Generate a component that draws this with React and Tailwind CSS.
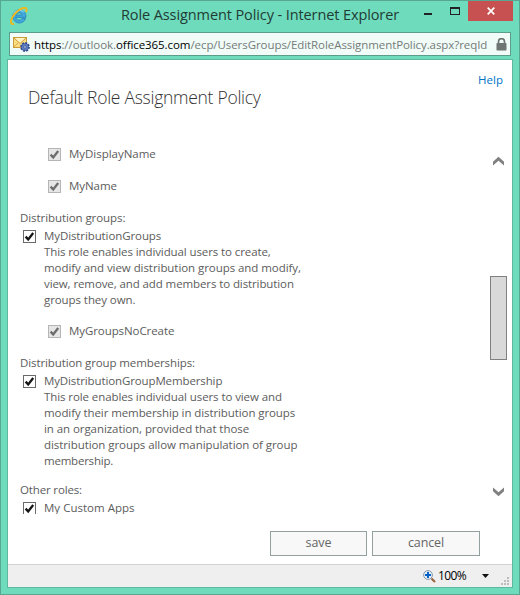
import React from "react";

function IELogo() {
  return (
    <svg width="18" height="18" viewBox="0 0 18 18" className="shrink-0">
      <path d="M15.6 11.6H11.9A3.4 3.4 0 0 1 5.6 10.4H15.9A6.6 6.6 0 1 0 15.6 11.6ZM5.7 8A3.4 3.4 0 0 1 12.1 8Z" fill="#41a9e0" stroke="#2179b5" strokeWidth=".7" />
      <path d="M3.6 8.2A6 6 0 0 1 13.6 4.9" fill="none" stroke="#8ad6f7" strokeWidth="1.2" />
      <path d="M3.9 16.9C1.6 17.6 .4 16 1.3 13C2.3 9.8 5 6.2 8.4 3.6C12 .8 15.6 .1 16.4 1.7C16.8 2.5 16.6 3.6 16 5" fill="none" stroke="#f0b91c" strokeWidth="1.9" />
    </svg>
  );
}

function MailGear() {
  return (
    <svg width="17" height="16" viewBox="0 0 17 16" className="shrink-0">
      <rect x=".5" y="1.5" width="13" height="10" fill="#fbdc80" stroke="#c99b3a" />
      <path d="M1 2L7 7.5L13 2" fill="#fff3c0" stroke="#c99b3a" />
      <path d="M1 11L5.5 6.5" stroke="#d9ad4c" />
      <circle cx="12" cy="11" r="4" fill="#4d69ac" stroke="#2f4a8c" strokeWidth="1.8" strokeDasharray="1.8 1.3" />
      <circle cx="12" cy="11" r="3.2" fill="#5b7abf" />
      <circle cx="12" cy="11" r="1.2" fill="#dbe5f7" stroke="#2f4a8c" strokeWidth=".7" />
    </svg>
  );
}

function Lock() {
  return (
    <svg width="11" height="13" viewBox="0 0 11 13" className="shrink-0">
      <path d="M2.5 6V3.6A2.9 2.9 0 0 1 8.5 3.6V6" fill="none" stroke="#6f7573" strokeWidth="1.7" />
      <rect x=".5" y="5" width="10" height="7.5" rx=".8" fill="#6f7573" />
    </svg>
  );
}

function Check({ disabled }) {
  return (
    <svg width="13" height="13" viewBox="0 0 13 13" className="shrink-0">
      <rect x=".5" y=".5" width="12" height="12" fill={disabled ? "#e6e6e6" : "#fff"} stroke={disabled ? "#b5b5b5" : "#6a6a6a"} />
      <path d="M2.6 6.6L5.2 9.4L10.2 3" fill="none" stroke={disabled ? "#6d6d6d" : "#161616"} strokeWidth="2.3" />
    </svg>
  );
}

function SubRole({ name, tracking }) {
  return (
    <div className="ml-10 flex h-4 items-center gap-2">
      <Check disabled />
      <span className={tracking}>{name}</span>
    </div>
  );
}

function Role({ name, tracking, lines = [] }) {
  return (
    <div className="ml-[15px] flex items-start gap-2">
      <div className="mt-[2px] flex"><Check /></div>
      <div className="whitespace-nowrap">
        <div className={tracking}>{name}</div>
        {lines.map(([text, spacing]) => (
          <div key={text} className={spacing}>{text}</div>
        ))}
      </div>
    </div>
  );
}

function Chevron({ down }) {
  return (
    <svg width="11" height="10" viewBox="0 0 11 10" className={down ? "rotate-180" : ""}>
      <path d="M0 5.8L5.5 .7L11 5.8V9.4L5.5 4.8L0 9.4Z" fill="#808080" />
    </svg>
  );
}

export default function App() {
  return (
    <div className="flex h-[595px] w-[520px] flex-col overflow-hidden border border-[#58a793] bg-[#6fdbbd] font-['Open_Sans','Noto_Sans',sans-serif] text-[11.5px] leading-4 whitespace-nowrap text-[#5c5c5c]">
      <header className="flex h-[31px] items-start pl-[9px]">
        <div className="mt-[6px]"><IELogo /></div>
        <h1 className="mt-[4px] ml-[93px] w-[280px] text-[14.5px] leading-5 tracking-[-0.1px] text-[#1f3b34]">Role Assignment Policy - Internet Explorer</h1>
        <svg width="40" height="20" viewBox="0 0 40 20" className="ml-[23px] shrink-0" shapeRendering="crispEdges">
          <rect x="0" y="12" width="8" height="2" fill="#222" />
          <path d="M26 6H36V14H26Z M27 8V13H35V8Z" fillRule="evenodd" fill="#222" />
        </svg>
        <div className="ml-auto mr-[6px] flex h-5 w-[45px] items-center justify-center bg-[#c75050]">
          <svg width="8" height="8" viewBox="0 0 8 8"><path d="M.7 .7L7.3 7.3M7.3 .7L.7 7.3" stroke="#fff" strokeWidth="1.7" /></svg>
        </div>
      </header>

      <div className="mx-2 flex h-6 items-center border border-[#5c9c8b] bg-[#f1fbf8] pr-[3px] pl-[3px]">
        <MailGear />
        <div className="mt-px ml-[4px] w-[457px] tracking-[-0.07px] text-[#747b79]">
          <span className="text-black">https</span>://outlook.<span className="text-black">office365.com</span>/ecp/UsersGroups/EditRoleAssignmentPolicy.aspx?reqId
        </div>
        <div className="ml-auto"><Lock /></div>
      </div>

      <main className="mx-[6px] mt-[3px] flex h-[529px] flex-col border border-[#5eb8a0] bg-white">
        <div className="flex h-7 items-center justify-end pt-3 pr-[9px] text-[#0072c6]">Help</div>
        <h2 className="-mt-px ml-5 h-[25px] text-[17.5px] leading-5 font-light tracking-[-0.27px] text-[#333]">Default Role Assignment Policy</h2>
        <div className="mt-[34px] flex h-[368px]">
          <div className="w-[482px] overflow-hidden">
            <SubRole name="MyDisplayName" tracking="tracking-[-0.03px]" />
            <div className="h-4" />
            <SubRole name="MyName" tracking="tracking-[-0.05px]" />
            <h3 className="mt-4 ml-3 tracking-[-0.08px]">Distribution groups:</h3>
            <div className="h-[2px]" />
            <Role
              name="MyDistributionGroups"
              tracking="tracking-[-0.1px]"
              lines={[
                ["This role enables individual users to create,", "tracking-[-0.1px]"],
                ["modify and view distribution groups and modify,", "tracking-[-0.06px]"],
                ["view, remove, and add members to distribution", "tracking-[-0.1px]"],
                ["groups they own.", "tracking-[-0.08px]"],
              ]}
            />
            <div className="h-[15px]" />
            <SubRole name="MyGroupsNoCreate" tracking="tracking-[-0.08px]" />
            <h3 className="mt-4 ml-3 tracking-[-0.11px]">Distribution group memberships:</h3>
            <div className="h-[2px]" />
            <Role
              name="MyDistributionGroupMembership"
              tracking="tracking-[-0.12px]"
              lines={[
                ["This role enables individual users to view and", "tracking-[-0.09px]"],
                ["modify their membership in distribution groups", "tracking-[-0.09px]"],
                ["in an organization, provided that those", "tracking-[-0.07px]"],
                ["distribution groups allow manipulation of group", "tracking-[-0.07px]"],
                ["membership.", "tracking-[-0.22px]"],
              ]}
            />
            <h3 className="mt-[13px] ml-3 tracking-[-0.15px]">Other roles:</h3>
            <div className="h-[2px]" />
            <Role name="My Custom Apps" tracking="tracking-[0.02px]" />
          </div>
          <div className="flex w-[17px] flex-col items-center pt-[10px] pr-px">
            <Chevron />
            <div className="mt-[110px] -mr-px h-[84px] w-[17px] shrink-0 border border-[#808080] bg-[#d9d9d9]" />
            <div className="mt-[127px]"><Chevron down /></div>
          </div>
        </div>
        <div className="mt-[17px] ml-[262px] flex h-[25px] gap-[5px] text-[12.5px] tracking-[-0.1px] text-[#666]">
          <button className="w-[97px] border border-[#92a09f] bg-[#f8f8f8] leading-none">save</button>
          <button className="w-[108px] border border-[#92a09f] bg-[#f8f8f8] leading-none">cancel</button>
        </div>
        <footer className="mt-auto flex h-[23px] items-center border-t border-[#d2d2d2] bg-[#efefef] pl-[415px] text-black">
          <svg width="13" height="13" viewBox="0 0 13 13">
            <path d="M8.5 8.5L12 12" stroke="#9b6540" strokeWidth="2.2" />
            <circle cx="5" cy="5" r="4.4" fill="#e4f1fb" stroke="#8794a5" />
            <path d="M5 2V8M2 5H8" stroke="#0b62c4" strokeWidth="2" />
          </svg>
          <span className="ml-[2px] w-[30px] text-xs tracking-[-0.6px]">100%</span>
          <svg width="7" height="4" viewBox="0 0 7 4" className="ml-[14px]"><path d="M0 0H7L3.5 4Z" fill="#111" /></svg>
          <svg width="8" height="8" viewBox="0 0 8 8" className="mt-[10px] ml-[12px]" fill="#bcbcbc" shapeRendering="crispEdges">
            <path d="M6 0h2v2h-2zM3 3h2v2h-2zM6 3h2v2h-2zM0 6h2v2h-2zM3 6h2v2h-2zM6 6h2v2h-2z" />
          </svg>
        </footer>
      </main>
    </div>
  );
}
